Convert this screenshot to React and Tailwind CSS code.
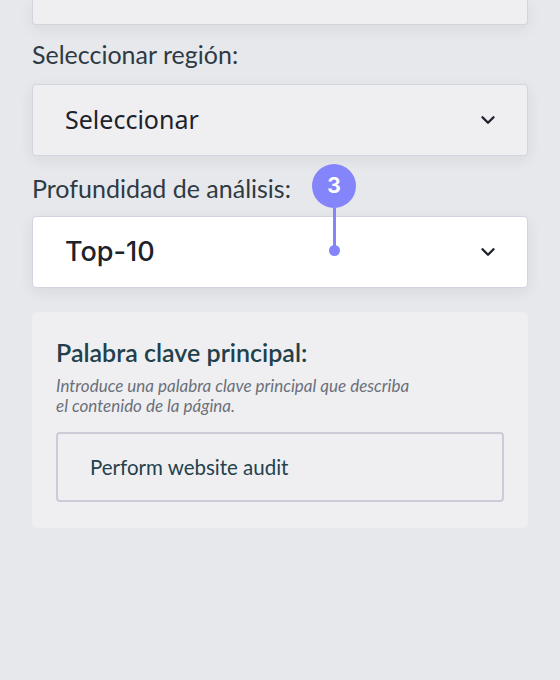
import React from 'react';
import { ChevronDown } from 'lucide-react';

function Select({ value, white, medium }) {
  return (
    <div
      className={`flex items-center justify-between h-[72px] pl-[32px] pr-[28px] rounded-[4px] border border-[#d3d4de] shadow-[0_4px_14px_rgba(40,45,70,0.08)] ${white ? 'bg-white' : 'bg-[#efeff2]'}`}
    >
      <span
        className={`text-[#1d222b] ${medium ? "font-['Inter',sans-serif] text-[27px] font-medium" : "font-['Noto_Sans',sans-serif] text-[25px] font-normal"}`}
      >
        {value}
      </span>
      <ChevronDown size={22} strokeWidth={2.6} className="text-[#1d222b]" />
    </div>
  );
}

export default function App() {
  return (
    <div className="w-[560px] h-[680px] bg-[#e7e8ec] px-[32px] font-['Lato',sans-serif] overflow-hidden">
      <div className="h-[25px] bg-[#efeff2] border border-t-0 border-[#d3d4de] rounded-b-[4px] shadow-[0_4px_14px_rgba(40,45,70,0.08)]" />

      <div className="mt-[14px] text-[25px] leading-[30px] text-[#2e3a44]">Seleccionar región:</div>
      <div className="mt-[15px]">
        <Select value="Seleccionar" />
      </div>

      <div className="mt-[17px] text-[25px] leading-[30px] text-[#2e3a44]">Profundidad de análisis:</div>
      <div className="relative mt-[13px]">
        <Select value="Top-10" white medium />
        <div className="absolute left-[280px] top-[-52px] flex flex-col items-center w-[44px]">
          <div className="w-[44px] h-[44px] rounded-full bg-[#8585fb] flex items-center justify-center text-white text-[21px] font-bold font-['Inter',sans-serif]">3</div>
          <div className="w-[3px] h-[40px] bg-[#8585fb]" />
          <div className="w-[11px] h-[11px] rounded-full bg-[#8585fb] -mt-[3px]" />
        </div>
      </div>

      <div className="mt-[24px] bg-[#efeff2] rounded-[6px] px-[24px] pt-[25px] pb-[26px]">
        <div className="text-[25px] leading-[30px] font-semibold text-[#22404a]">Palabra clave principal:</div>
        <p className="mt-[9px] text-[17px] leading-[20px] italic text-[#6b7079] w-[365px]">
          Introduce una palabra clave principal que describa el contenido de la página.
        </p>
        <div className="mt-[16px] h-[70px] border-2 border-[#cbccd8] rounded-[4px] flex items-center pl-[32px]">
          <span className="text-[20.5px] text-[#24414b]">Perform website audit</span>
        </div>
      </div>
    </div>
  );
}
